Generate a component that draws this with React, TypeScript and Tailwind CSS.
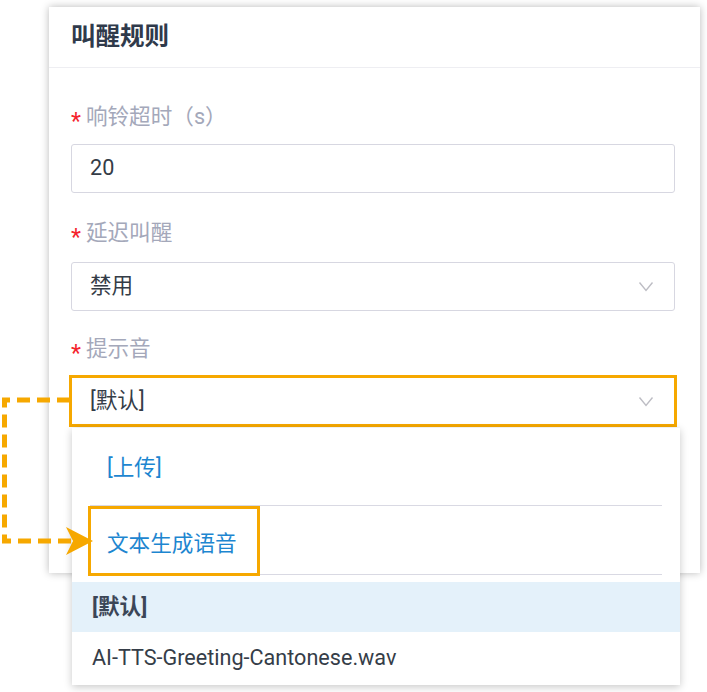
import React from "react";

const FONT = { fontFamily: 'Roboto, "Noto Sans CJK SC", "Noto Sans", sans-serif' };

function Chevron() {
  return (
    <svg width="16" height="11" viewBox="0 0 16 11" className="shrink-0">
      <path d="M1.5 1.5 L8 9.5 L14.5 1.5" fill="none" stroke="#bdbdc4" strokeWidth="1.4" />
    </svg>
  );
}

function Label({ text }: { text: string }) {
  return (
    <div className="h-[30px] flex items-center text-[21.6px] text-[#a4a8ba] leading-none">
      <span className="text-[#f5222d] text-[23px] mr-[5px] translate-y-[4px]">*</span>
      <span>{text}</span>
    </div>
  );
}

export default function App() {
  return (
    <div className="relative w-[707px] h-[692px] bg-white overflow-hidden" style={FONT}>
      {/* Panel */}
      <div className="ml-[49px] mt-[7px] w-[651px] h-[566px] bg-white shadow-[0_0_8px_rgba(0,0,0,0.28)]">
        <div className="h-[61px] flex items-center pl-[22px] border-b border-[#eeeef2]">
          <span className="text-[24.5px] font-bold text-[#2f3a4b]">叫醒规则</span>
        </div>
        <div className="pl-[22px] pr-[25px] pt-[34px]">
          <Label text="响铃超时（s）" />
          <div className="mt-[12px] h-[49px] border border-[#d7d7e1] rounded-[3px] flex items-center pl-[18px] text-[21.6px] text-[#343c47]">
            20
          </div>
          <div className="mt-[25px]">
            <Label text="延迟叫醒" />
          </div>
          <div className="mt-[14px] h-[49px] border border-[#d7d7e1] rounded-[3px] flex items-center justify-between pl-[18px] pr-[20px] text-[21.6px] text-[#343c47]">
            <span>禁用</span>
            <Chevron />
          </div>
          <div className="mt-[23px]">
            <Label text="提示音" />
          </div>
          <div className="mt-[13px] h-[48px] border border-[#d7d7e1] outline-[3px] outline-solid outline-[#f6a800] -outline-offset-1 flex items-center justify-between pl-[18px] pr-[20px] text-[21.6px] text-[#343c47]">
            <span>[默认]</span>
            <Chevron />
          </div>
        </div>
      </div>

      {/* Dropdown menu */}
      <div className="absolute left-[72px] top-[428px] w-[608px] h-[257px] bg-white shadow-[0_2px_8px_rgba(0,0,0,0.22)] text-[21.6px]">
        <div className="px-[18px]">
          <div className="h-[78px] pt-[3px] flex items-center pl-[17px] border-b border-[#d9d9e3] text-[#1d86d0]">
            [上传]
          </div>
          <div className="h-[69px] pt-[9px] flex items-center pl-[17px] border-b border-[#d9d9e3] text-[#1d86d0]">
            文本生成语音
          </div>
        </div>
        <div className="mt-[7px] h-[50px] bg-[#e4f1fa] flex items-center pl-[20px] font-bold text-[#3b4657]">
          [默认]
        </div>
        <div className="h-[53px] flex items-center pl-[20px] text-[#353d48]">
          AI-TTS-Greeting-Cantonese.wav
        </div>
        {/* annotation box */}
        <div className="absolute left-[16px] top-[78px] w-[172px] h-[70px] border-[3px] border-[#f6a800] pointer-events-none" />
      </div>

      {/* Dashed connector annotation */}
      <svg className="absolute left-0 top-0 pointer-events-none" width="707" height="692" viewBox="0 0 707 692">
        <path
          d="M70 400 H4.5 V541 H72"
          fill="none"
          stroke="#f6a800"
          strokeWidth="5"
          strokeDasharray="13 7"
        />
        <polygon points="66,527 93,541 66,555 73,541" fill="#f6a800" />
      </svg>
    </div>
  );
}
